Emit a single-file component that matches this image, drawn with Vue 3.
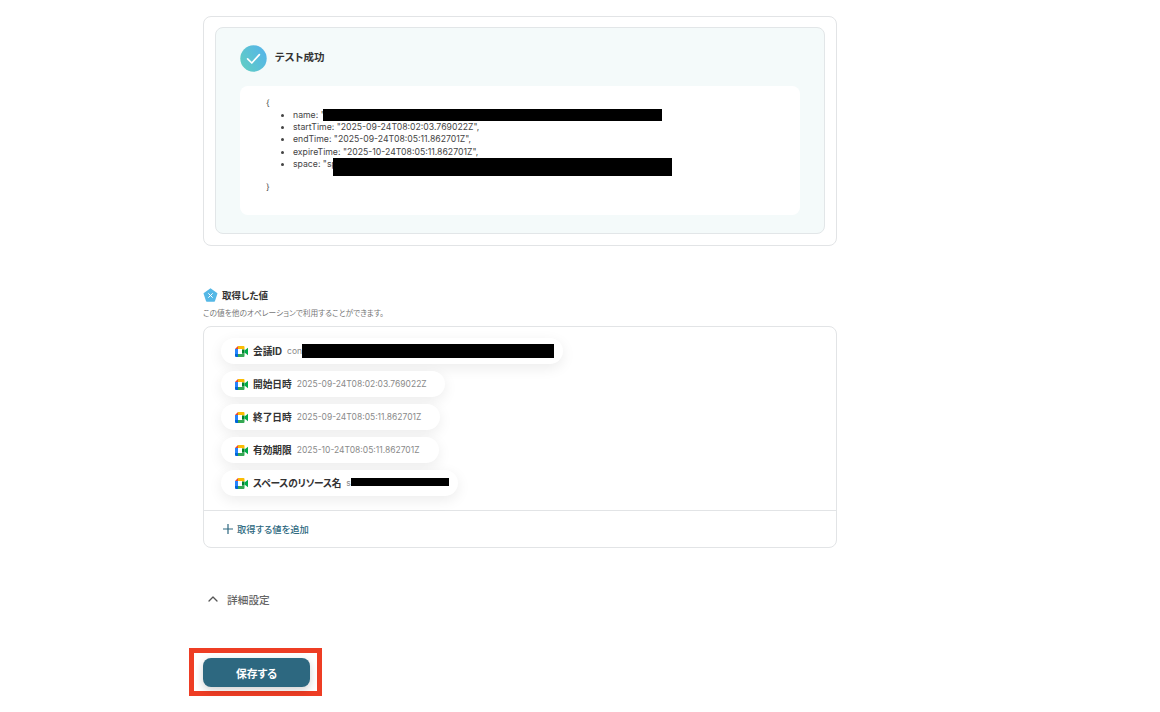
<script setup>
const jsonRows = [
  { key: 'name', text: 'name: "', redact: 'redact-name' },
  { key: 'start', text: 'startTime: "2025-09-24T08:02:03.769022Z",' },
  { key: 'end', text: 'endTime: "2025-09-24T08:05:11.862701Z",' },
  { key: 'expire', text: 'expireTime: "2025-10-24T08:05:11.862701Z",' },
  { key: 'space', text: 'space: "sp', redact: 'redact-space' },
]
const chips = [
  { label: '会議ID', value: 'con', width: 342, redact: 'redact-c1' },
  { label: '開始日時', value: '2025-09-24T08:02:03.769022Z', width: 224 },
  { label: '終了日時', value: '2025-09-24T08:05:11.862701Z', width: 219 },
  { label: '有効期限', value: '2025-10-24T08:05:11.862701Z', width: 218 },
  { label: 'スペースのリソース名', value: 's', width: 237, redact: 'redact-c5', tight: true },
]
</script>

<template>
  <main class="page">
    <section class="card test-card">
      <div class="success">
        <div class="success-head">
          <svg class="check" width="27" height="27" viewBox="0 0 27 27">
            <defs>
              <linearGradient id="g" x1="0" y1="1" x2="1" y2="0.4">
                <stop offset="0" stop-color="#62d0c0" />
                <stop offset="1" stop-color="#56b6e6" />
              </linearGradient>
            </defs>
            <circle cx="13.5" cy="13.5" r="13.2" fill="url(#g)" />
            <path d="M7.6 13.8l4.2 4.2 7.6-8.4" fill="none" stroke="#fff" stroke-width="1.7" stroke-linecap="round" stroke-linejoin="round" />
          </svg>
          <span class="success-title">テスト成功</span>
        </div>
        <div class="json">
          <div class="brace">{</div>
          <ul class="json-list">
            <li v-for="r in jsonRows" :key="r.key" class="json-row">
              {{ r.text }}<span v-if="r.redact" class="redact" :class="r.redact"></span>
            </li>
          </ul>
          <div class="brace close">}</div>
        </div>
      </div>
    </section>

    <div class="values-head">
      <svg width="15" height="14" viewBox="0 0 15 14">
        <path d="M7.5.3l6.6 4.6c.3.2.4.5.3.9l-2.4 7.3c-.1.4-.4.6-.8.6H3.800c-.4 0-.7-.2-.8-.6L.6 5.800c-.1-.4 0-.7.3-.9z" fill="#55b8e6" />
        <path d="M5.6 5.600l3.800 3.800M9.400 5.600L5.600 9.400" stroke="#fff" stroke-width="1" stroke-linecap="round" />
      </svg>
      <span>取得した値</span>
    </div>
    <p class="values-sub">この値を他のオペレーションで利用することができます。</p>

    <section class="card values-card">
      <div class="chips">
        <div v-for="c in chips" :key="c.label" class="chip" :style="{ width: c.width + 'px' }">
          <svg class="meet" width="13" height="11" viewBox="0 0 13 11">
            <path d="M0 3L3 0v3z" fill="#ea4335" />
            <path d="M3 0h5.500a1 1 0 0 1 1 1v2.500H7V3H3z" fill="#fbbc04" />
            <path d="M0 3h3v5H0z" fill="#2684fc" />
            <path d="M0 8h3v3H1a1 1 0 0 1-1-1z" fill="#0066da" />
            <path d="M3 8h4v-.5h2.500V10a1 1 0 0 1-1 1H3z" fill="#34a853" />
            <path d="M7 3.500h2.500v4H7z" fill="#00832d" />
            <path d="M9.500 4.500L13 1.800v7.400L9.500 6.500z" fill="#00ac47" />
          </svg>
          <span class="chip-label" :class="{ tight: c.tight }">{{ c.label }}</span>
          <span class="chip-value">{{ c.value }}</span>
          <span v-if="c.redact" class="redact" :class="c.redact"></span>
        </div>
      </div>
      <div class="add-row">
        <svg width="10" height="10" viewBox="0 0 10 10">
          <path d="M5 0v10M0 5h10" stroke="#2d6880" stroke-width="1.200" />
        </svg>
        <span>取得する値を追加</span>
      </div>
    </section>

    <div class="details">
      <svg width="10" height="6" viewBox="0 0 10 6">
        <path d="M1 5l4-4 4 4" fill="none" stroke="#555" stroke-width="1.300" stroke-linecap="round" stroke-linejoin="round" />
      </svg>
      <span>詳細設定</span>
    </div>

    <div class="save-frame">
      <button class="save" type="button">保存する</button>
    </div>
  </main>
</template>

<style scoped>
.page {
  width: 634px;
  height: 712px;
  box-sizing: border-box;
  margin-left: 203px;
  padding-top: 16px;
  font-family: Inter, "Noto Sans CJK JP", sans-serif;
  font-feature-settings: "palt";
  color: #333;
}
.card {
  box-sizing: border-box;
  background: #fff;
  border: 1px solid #e2e4e6;
  border-radius: 8px;
}
.test-card {
  height: 230px;
  padding: 10px 11px 11px;
}
.success {
  height: 207px;
  box-sizing: border-box;
  background: #f4fafa;
  border: 1px solid #e2e6e8;
  border-radius: 8px;
  padding: 17px 24px 0;
}
.success-head {
  display: flex;
  align-items: center;
  gap: 8px;
  height: 27px;
}
.check {
  flex: none;
}
.success-title {
  font-size: 10.500px;
  font-weight: 700;
  color: #333;
  margin-top: -5px;
}
.json {
  height: 129px;
  margin-top: 14px;
  box-sizing: border-box;
  background: #fff;
  border-radius: 8px;
  padding: 11px 26px 0;
  font-size: 8.700px;
  font-feature-settings: normal;
  color: #444;
}
.brace {
  line-height: 12px;
}
.brace.close {
  margin-top: 11px;
}
.json-list {
  margin: 0;
  padding: 0 0 0 27px;
}
.json-row {
  position: relative;
  height: 12.200px;
  line-height: 12.200px;
  white-space: nowrap;
}
.redact {
  position: absolute;
  background: #000;
}
.redact-name {
  left: 30px;
  top: 0;
  width: 339px;
  height: 12px;
}
.redact-space {
  left: 40px;
  top: 0;
  width: 339px;
  height: 18px;
}
.values-head {
  display: flex;
  align-items: center;
  gap: 4px;
  margin-top: 41px;
  height: 15px;
  font-size: 9.500px;
  font-weight: 700;
  color: #333;
}
.values-sub {
  margin: 6px 0 0;
  height: 12px;
  line-height: 12px;
  font-size: 7.700px;
  color: #777;
}
.values-card {
  margin-top: 6px;
  height: 222px;
  display: flex;
  flex-direction: column;
}
.chips {
  flex: 1;
  display: flex;
  flex-direction: column;
  align-items: flex-start;
  gap: 7px;
  padding: 11px 0 0 17px;
}
.chip {
  position: relative;
  box-sizing: border-box;
  height: 26px;
  border-radius: 13px;
  background: #fff;
  box-shadow: 0 4px 14px rgba(0, 0, 0, 0.08);
  display: flex;
  align-items: center;
  padding-left: 14px;
  white-space: nowrap;
}
.meet {
  flex: none;
  margin-right: 5px;
}
.chip-label {
  font-size: 9.700px;
  font-weight: 700;
  color: #333;
  margin-top: -1px;
}
.chip-label.tight {
  letter-spacing: -0.2px;
}
.chip-value {
  margin-left: 5px;
  font-size: 8.500px;
  font-feature-settings: normal;
  color: #8a8a8a;
}
.redact-c1 {
  left: 81px;
  top: 6px;
  width: 252px;
  height: 14px;
}
.redact-c5 {
  left: 130px;
  top: 8px;
  width: 98px;
  height: 8px;
}
.add-row {
  height: 37px;
  box-sizing: border-box;
  border-top: 1px solid #e2e4e6;
  display: flex;
  align-items: center;
  gap: 4px;
  padding: 0 0 1px 19px;
  font-size: 9.300px;
  font-weight: 500;
  color: #2d6880;
}
.details {
  display: flex;
  align-items: center;
  gap: 9px;
  margin-top: 43px;
  height: 16px;
  padding-left: 5px;
  font-size: 10.700px;
  font-weight: 500;
  color: #666;
}
.save-frame {
  box-sizing: border-box;
  width: 133px;
  height: 48px;
  margin: 41px 0 0 -14px;
  border: 5px solid #ee3d24;
  padding: 5px 0 0 9px;
}
.save {
  display: block;
  width: 107px;
  height: 29px;
  border: 0;
  border-radius: 8px;
  background: #2d6880;
  box-shadow: 0 3px 8px rgba(0, 0, 0, 0.18);
  color: #fff;
  font-family: inherit;
  font-feature-settings: inherit;
  font-size: 10.800px;
  font-weight: 700;
  padding: 0;
}
</style>

<style>
html,
body {
  margin: 0;
  background: #fff;
}
</style>
